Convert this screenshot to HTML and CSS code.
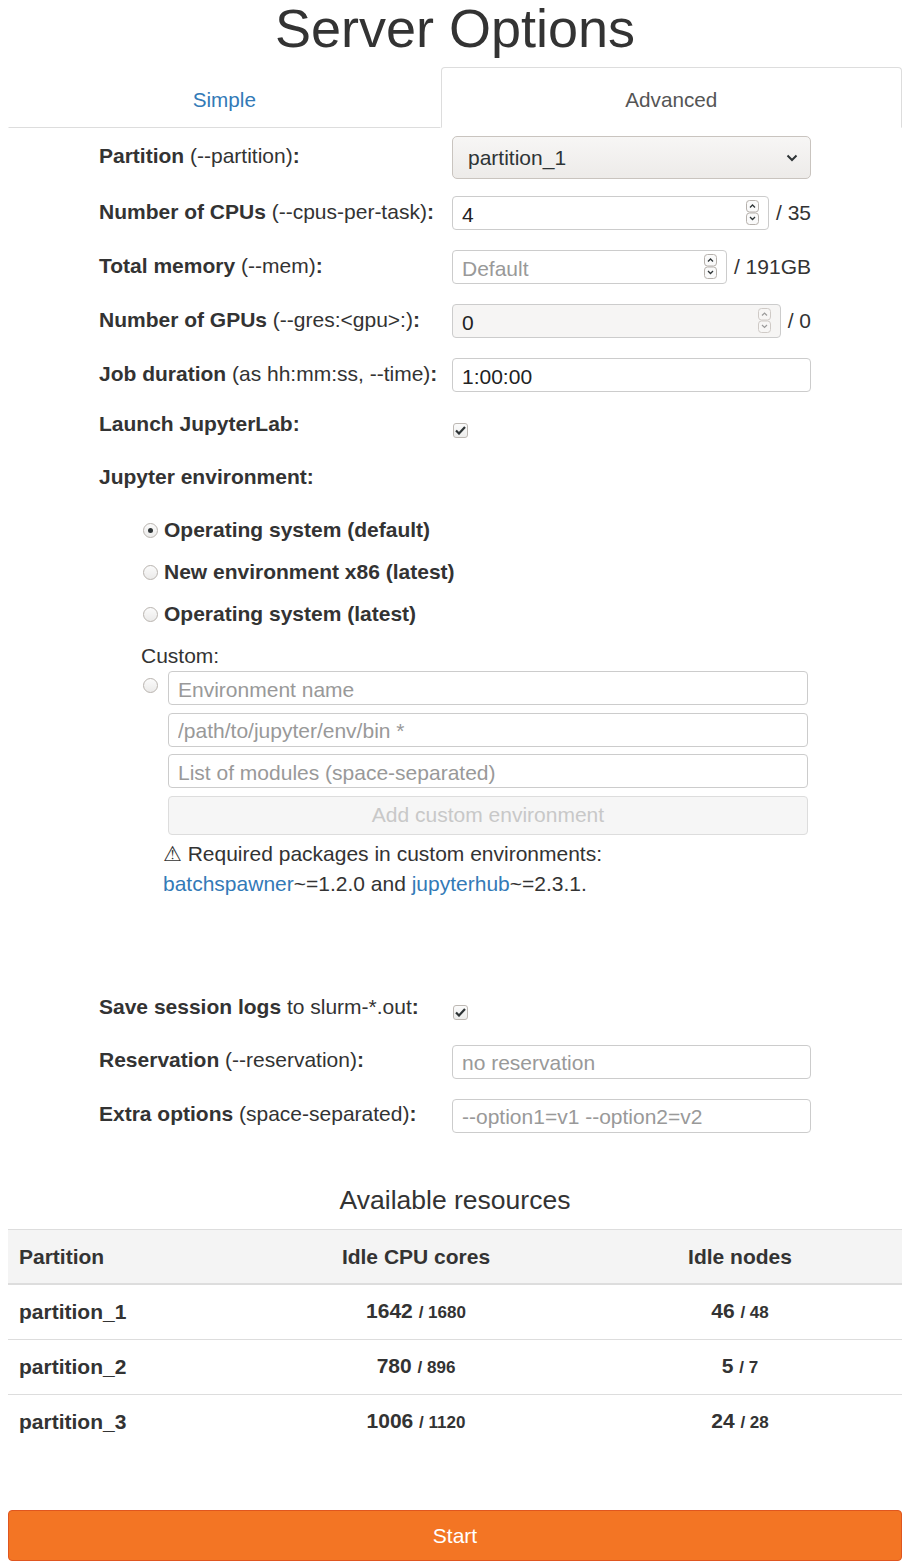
FILE: index.html
```html
<!DOCTYPE html>
<html lang="en">
<head>
<meta charset="utf-8">
<title>Server Options</title>
<link rel="stylesheet" href="styles.css">
</head>
<body>
<div class="page">
  <h1 class="title">Server Options</h1>

  <ul class="tabs">
    <li class="tab"><a class="tab-link" href="#">Simple</a></li>
    <li class="tab active"><span class="tab-link">Advanced</span></li>
  </ul>

  <form class="form">
    <div class="row row-first">
      <label class="lbl"><b>Partition</b> (--partition)<b>:</b></label>
      <div class="select-wrap">
        <select class="select"><option>partition_1</option></select>
        <svg class="chev" width="12" height="8" viewBox="0 0 12 8"><path d="M1.5 1.5 L6 6 L10.5 1.5" fill="none" stroke="#2e3436" stroke-width="2"/></svg>
      </div>
    </div>

    <div class="row">
      <label class="lbl"><b>Number of CPUs</b> (--cpus-per-task)<b>:</b></label>
      <div class="numgroup">
        <div class="numbox">
          <input class="input" type="text" value="4">
          <svg class="spin" width="13" height="25" viewBox="0 0 13 25"><rect x="0.5" y="0.5" width="12" height="11.5" rx="3" fill="#fafafa" stroke="#b6b1ac"/><rect x="0.5" y="13" width="12" height="11.5" rx="3" fill="#fafafa" stroke="#b6b1ac"/><path d="M4 7.5 L6.5 5 L9 7.5" fill="none" stroke="#2e3436" stroke-width="1.3"/><path d="M4 17 L6.5 19.5 L9 17" fill="none" stroke="#2e3436" stroke-width="1.3"/></svg>
        </div>
        <span class="unit">/ 35</span>
      </div>
    </div>

    <div class="row">
      <label class="lbl"><b>Total memory</b> (--mem)<b>:</b></label>
      <div class="numgroup">
        <div class="numbox">
          <input class="input" type="text" placeholder="Default">
          <svg class="spin" width="13" height="25" viewBox="0 0 13 25"><rect x="0.5" y="0.5" width="12" height="11.5" rx="3" fill="#fafafa" stroke="#b6b1ac"/><rect x="0.5" y="13" width="12" height="11.5" rx="3" fill="#fafafa" stroke="#b6b1ac"/><path d="M4 7.5 L6.5 5 L9 7.5" fill="none" stroke="#2e3436" stroke-width="1.3"/><path d="M4 17 L6.5 19.5 L9 17" fill="none" stroke="#2e3436" stroke-width="1.3"/></svg>
        </div>
        <span class="unit">/ 191GB</span>
      </div>
    </div>

    <div class="row">
      <label class="lbl"><b>Number of GPUs</b> (--gres:&lt;gpu&gt;:)<b>:</b></label>
      <div class="numgroup">
        <div class="numbox">
          <input class="input input-disabled" type="text" value="0" disabled>
          <svg class="spin" width="13" height="25" viewBox="0 0 13 25"><rect x="0.5" y="0.5" width="12" height="11.5" rx="3" fill="#f7f6f5" stroke="#cfcac6"/><rect x="0.5" y="13" width="12" height="11.5" rx="3" fill="#f7f6f5" stroke="#cfcac6"/><path d="M4 7.5 L6.5 5 L9 7.5" fill="none" stroke="#9a9a9a" stroke-width="1.2"/><path d="M4 17 L6.5 19.5 L9 17" fill="none" stroke="#9a9a9a" stroke-width="1.2"/></svg>
        </div>
        <span class="unit">/ 0</span>
      </div>
    </div>

    <div class="row">
      <label class="lbl"><b>Job duration</b> (as hh:mm:ss, --time)<b>:</b></label>
      <input class="input" type="text" value="1:00:00">
    </div>

    <div class="row row-check">
      <label class="lbl"><b>Launch JupyterLab:</b></label>
      <span class="check"><svg width="11" height="9" viewBox="0 0 11 9"><path d="M1 4.5 L4 7.5 L10 1" fill="none" stroke="#2e3436" stroke-width="2.2"/></svg></span>
    </div>

    <div class="row row-env">
      <label class="lbl"><b>Jupyter environment:</b></label>
    </div>

    <div class="env">
      <label class="radio-row"><span class="radio on"></span><b>Operating system (default)</b></label>
      <label class="radio-row"><span class="radio"></span><b>New environment x86 (latest)</b></label>
      <label class="radio-row"><span class="radio"></span><b>Operating system (latest)</b></label>
      <div class="custom-label">Custom:</div>
      <div class="custom">
        <span class="radio radio-custom"></span>
        <div class="custom-fields">
          <input class="input" type="text" placeholder="Environment name">
          <input class="input" type="text" placeholder="/path/to/jupyter/env/bin *">
          <input class="input" type="text" placeholder="List of modules (space-separated)">
          <button class="add-btn" type="button" disabled>Add custom environment</button>
        </div>
      </div>
      <p class="warn">&#x26A0;&#xFE0E; Required packages in custom environments:<br><a href="#">batchspawner</a>~=1.2.0 and <a href="#">jupyterhub</a>~=2.3.1.</p>
    </div>

    <div class="row row-check row-logs">
      <label class="lbl"><b>Save session logs</b> to slurm-*.out<b>:</b></label>
      <span class="check"><svg width="11" height="9" viewBox="0 0 11 9"><path d="M1 4.5 L4 7.5 L10 1" fill="none" stroke="#2e3436" stroke-width="2.2"/></svg></span>
    </div>

    <div class="row">
      <label class="lbl"><b>Reservation</b> (--reservation)<b>:</b></label>
      <input class="input" type="text" placeholder="no reservation">
    </div>

    <div class="row row-last">
      <label class="lbl"><b>Extra options</b> (space-separated)<b>:</b></label>
      <input class="input" type="text" placeholder="--option1=v1 --option2=v2">
    </div>
  </form>

  <h3 class="res-title">Available resources</h3>
  <table class="res">
    <thead>
      <tr><th class="c1">Partition</th><th class="c2">Idle CPU cores</th><th class="c3">Idle nodes</th></tr>
    </thead>
    <tbody>
      <tr><td class="c1">partition_1</td><td class="c2">1642 <small>/ 1680</small></td><td class="c3">46 <small>/ 48</small></td></tr>
      <tr><td class="c1">partition_2</td><td class="c2">780 <small>/ 896</small></td><td class="c3">5 <small>/ 7</small></td></tr>
      <tr><td class="c1">partition_3</td><td class="c2">1006 <small>/ 1120</small></td><td class="c3">24 <small>/ 28</small></td></tr>
    </tbody>
  </table>

  <button class="start" type="button">Start</button>
</div>
</body>
</html>
```

FILE: styles.css
```css
* { box-sizing: border-box; }

html, body {
  margin: 0;
  padding: 0;
  background: #fff;
}

body {
  font-family: "Liberation Sans", Arial, "DejaVu Sans", sans-serif;
  font-size: 21px;
  line-height: 30px;
  color: #333;
}

.page {
  width: 910px;
  padding: 0 8px;
}

.title {
  margin: 0 0 10px;
  font-size: 54px;
  font-weight: 400;
  line-height: 57px;
  text-align: center;
  color: #333;
}

/* Tabs */
.tabs {
  display: flex;
  margin: 0;
  padding: 0;
  list-style: none;
}

.tab {
  flex: 1 1 auto;
  text-align: center;
  border: 1px solid transparent;
  border-bottom: 1px solid #ddd;
  padding: 17px 15px 13px;
  line-height: 29px;
  font-size: 20.7px;
}

.tab.active {
  border: 1px solid #ddd;
  border-bottom-color: transparent;
  border-radius: 4px 4px 0 0;
}

.tab-link {
  color: #337ab7;
  text-decoration: none;
}

.tab.active .tab-link {
  color: #555;
}

/* Form */
.form {
  margin: 8px 91px 0;
}

.row {
  display: grid;
  grid-template-columns: 353px 359px;
  align-items: center;
  margin-bottom: 20px;
}

.row-first { margin-bottom: 17px; }

.lbl {
  display: block;
  margin-top: -3px;
}

.lbl b { font-weight: 700; }

.select-wrap {
  position: relative;
}

.select {
  display: block;
  width: 100%;
  height: 43px;
  appearance: none;
  -webkit-appearance: none;
  border: 1px solid #c9c4bf;
  border-radius: 5px;
  background: linear-gradient(#f7f6f5, #edebe9);
  padding: 0 15px;
  font: inherit;
  color: #2e3436;
}

.chev {
  position: absolute;
  right: 13px;
  top: 18px;
}

.numgroup {
  display: flex;
  align-items: center;
}

.numbox {
  position: relative;
  flex: 1;
}

.spin {
  position: absolute;
  right: 10px;
  top: 4px;
}

.unit {
  margin-left: 7px;
  white-space: nowrap;
}

.input {
  display: block;
  width: 100%;
  height: 34px;
  border: 1px solid #ccc;
  border-radius: 4px;
  padding: 3px 9px 0;
  font: inherit;
  color: #222;
  background: #fff;
}

.input::placeholder {
  color: #999;
}

.input-disabled {
  background: #f6f5f4;
  color: #222;
}

.row-check {
  align-items: start;
  margin-top: 0;
  margin-bottom: 26px;
}

.check {
  display: flex;
  align-items: center;
  justify-content: center;
  width: 15px;
  height: 15px;
  margin: 11px 0 0 1px;
  border: 1px solid #bdb8b3;
  border-radius: 3px;
  background: linear-gradient(#fbfbfb, #ededec);
}

.row-env {
  margin-bottom: 17px;
}

/* Environment options */
.env {
  margin: 0 3px 0 44px;
}

.radio-row {
  display: flex;
  align-items: center;
  height: 42px;
}

.radio {
  flex: none;
  position: relative;
  width: 15px;
  height: 15px;
  margin-right: 6px;
  border: 1px solid #b9b4af;
  border-radius: 50%;
  background: linear-gradient(#fbfbfb, #ebeae9);
}

.radio.on::after {
  content: "";
  position: absolute;
  left: 4px;
  top: 4px;
  width: 5px;
  height: 5px;
  border-radius: 50%;
  background: #2e3436;
}

.custom-label {
  height: 42px;
  line-height: 42px;
  margin-left: -2px;
}

.custom {
  display: flex;
  align-items: flex-start;
  margin-top: -6px;
}

.radio-custom {
  margin: 7px 10px 0 0;
}

.custom-fields {
  flex: 1;
  display: flex;
  flex-direction: column;
  gap: 7.6px;
}

.add-btn {
  height: 39px;
  border: 1px solid #ddd;
  border-radius: 4px;
  background: #f6f6f6;
  color: #c8c8c8;
  font: inherit;
  padding: 0;
}

.warn {
  margin: 4px 0 0 20px;
  line-height: 30px;
}

.warn a {
  color: #337ab7;
  text-decoration: none;
}

.row-logs {
  margin-top: 96px;
  margin-bottom: 23px;
}

.row-logs .check {
  margin-top: 10px;
}

.row-last {
  margin-bottom: 0;
}

/* Resources */
.res-title {
  margin: 47px 0 0;
  font-size: 26.5px;
  font-weight: 400;
  line-height: 40px;
  text-align: center;
}

.res {
  width: 100%;
  margin-top: 9px;
  border-collapse: collapse;
  table-layout: fixed;
}

.res th,
.res td {
  height: 55px;
  padding: 0 11px;
  font-weight: 700;
  border-top: 1px solid #ddd;
  vertical-align: middle;
}

.res thead th {
  background: #f4f4f4;
  border-bottom: 2px solid #ddd;
}

.res .c1 { width: 246px; text-align: left; }
.res .c2 { width: 324px; text-align: center; }
.res .c3 { width: 324px; text-align: center; }

.res small {
  font-size: 17px;
  font-weight: 700;
}

.start {
  display: block;
  width: 100%;
  height: 51px;
  margin-top: 61px;
  border: 1px solid #e0561f;
  border-radius: 4px;
  background: #f37524;
  color: #fff;
  font: inherit;
}
```
